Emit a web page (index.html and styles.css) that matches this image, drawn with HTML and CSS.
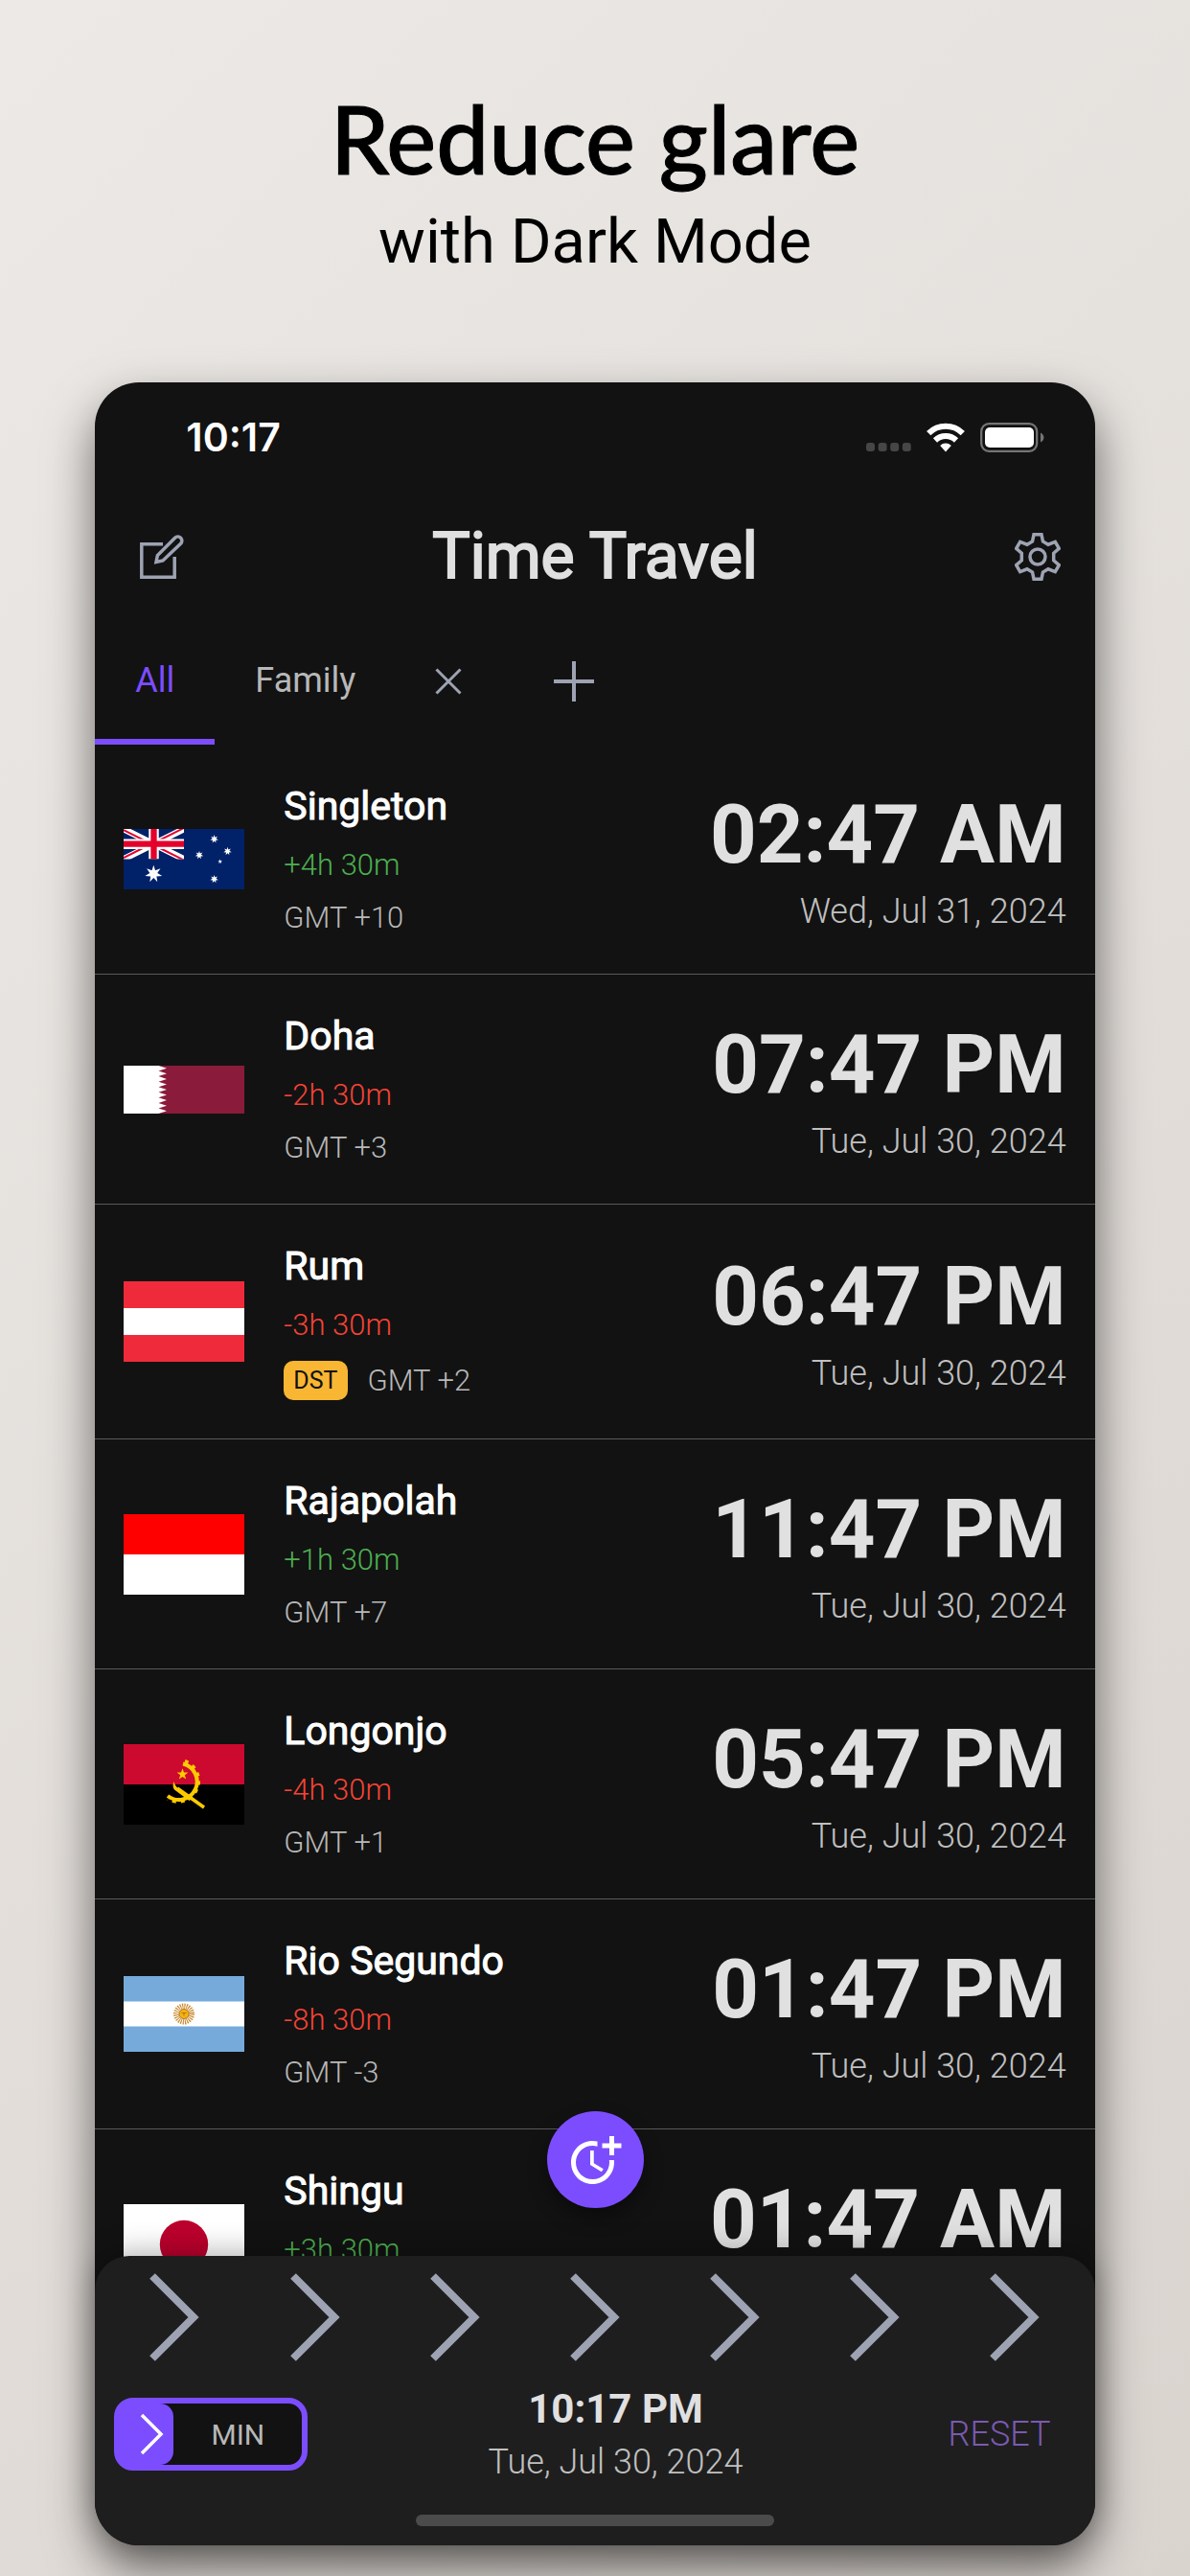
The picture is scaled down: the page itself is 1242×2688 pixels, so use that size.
FILE: index.html
```html
<!DOCTYPE html>
<html lang="en">
<head>
    <meta charset="UTF-8">
    <meta name="viewport" content="width=device-width, initial-scale=1.0">
    <title>Time Travel - Dark Mode</title>
    <link rel="stylesheet" href="styles.css">
</head>
<body>
    <header class="promo">
        <h1>Reduce glare</h1>
        <p>with Dark Mode</p>
    </header>

    <main class="phone">
        <!-- Status bar -->
        <div class="status-bar">
            <span class="status-time">10:17</span>
            <div class="status-icons">
                <svg class="signal" viewBox="0 0 47 31">
                    <g fill="#464646">
                        <rect x="0" y="21" width="9" height="9" rx="3"/>
                        <rect x="12.6" y="21" width="9" height="9" rx="3"/>
                        <rect x="25.2" y="21" width="9" height="9" rx="3"/>
                        <rect x="37.8" y="21" width="9" height="9" rx="3"/>
                    </g>
                </svg>
                <svg class="wifi" viewBox="0 0 40 31">
                    <g fill="none" stroke="#fff" stroke-width="6">
                        <path d="M2.2 11.2a25.2 25.2 0 0 1 35.6 0"/>
                        <path d="M9 18.5a15.6 15.6 0 0 1 22 0"/>
                    </g>
                    <path d="M14.2 24a8.2 8.2 0 0 1 11.6 0L20 30.6z" fill="#fff"/>
                </svg>
                <svg class="battery" viewBox="0 0 68 31">
                    <rect x="1.2" y="1.2" width="58" height="28.6" rx="8" fill="none" stroke="#757575" stroke-width="2.2"/>
                    <rect x="5" y="5" width="51" height="21" rx="5" fill="#fff"/>
                    <path d="M63 10.5c4.6 2 4.6 8 0 10z" fill="#757575"/>
                </svg>
            </div>
        </div>

        <!-- Title bar -->
        <div class="title-bar">
            <button class="icon-btn" aria-label="Edit">
                <svg width="48" height="50" viewBox="0 0 48 50" fill="none" stroke="#9da3b2" stroke-width="3.5">
                    <path d="M24 11.7H1.8V46.2H36.2V25"/>
                    <path d="M17 30.5l1.4-7L36.6 5.2a4.2 4.2 0 0 1 6 6L24 29z"/>
                </svg>
            </button>
            <h2>Time Travel</h2>
            <button class="icon-btn" aria-label="Settings">
                <svg width="48" height="50" viewBox="-24 -25 48 50" fill="none" stroke="#9da3b2" stroke-width="3.5">
                    <path d="M-4-23.2H4L5.5-16 11-12.8 18.3-15.6 22.3-8.6 16.7-3.8V3.8L22.3 8.6 18.3 15.6 11 12.8 5.5 16 4 23.2H-4L-5.5 16-11 12.8-18.3 15.6-22.3 8.6-16.7 3.8V-3.8L-22.3-8.6-18.3-15.6-11-12.8-5.5-16z"/>
                    <circle r="8"/>
                </svg>
            </button>
        </div>

        <!-- Group tabs -->
        <nav class="tabs">
            <button class="tab active">All</button>
            <button class="tab">Family</button>
            <button class="tab-icon" aria-label="Remove group">
                <svg width="42" height="42" viewBox="0 0 42 42" stroke="#9da3b2" stroke-width="3">
                    <path d="M8.5 8.5l25 25M33.5 8.5l-25 25"/>
                </svg>
            </button>
            <button class="tab-icon wide" aria-label="Add group">
                <svg width="42" height="42" viewBox="0 0 42 42" stroke="#9da3b2" stroke-width="4">
                    <path d="M21 0v42M0 21h42"/>
                </svg>
            </button>
        </nav>

        <!-- Clocks -->
        <ul class="clocks">
            <li class="clock">
                <svg class="flag" viewBox="0 0 126 63">
                    <defs>
                        <clipPath id="jack"><path d="M0 0h63v31.5H0z"/></clipPath>
                        <polygon id="star7" points="0,-10 1.9,-4 7.8,-6.2 4.3,-1 9.7,2.2 3.4,2.7 4.3,9 0,4.4 -4.3,9 -3.4,2.7 -9.7,2.2 -4.3,-1 -7.8,-6.2 -1.9,-4"/>
                        <polygon id="star5" points="0,-10 2.4,-3.2 9.5,-3.1 3.8,1.2 5.9,8.1 0,4 -5.9,8.1 -3.8,1.2 -9.5,-3.1 -2.4,-3.2"/>
                    </defs>
                    <path fill="#012169" d="M0 0h126v63H0z"/>
                    <g clip-path="url(#jack)">
                        <path d="M0 0l63 31.5M63 0L0 31.5" stroke="#fff" stroke-width="6.5"/>
                        <path d="M0 1.2l31 15.5M32 17l31 15.5M63-1L32 14.5M31 14.5L0 30" stroke="#e4002b" stroke-width="2"/>
                        <path d="M31.5 0v31.5M0 15.7h63" stroke="#fff" stroke-width="10.5"/>
                        <path d="M31.5 0v31.5M0 15.7h63" stroke="#e4002b" stroke-width="6.3"/>
                    </g>
                    <g fill="#fff">
                        <use href="#star7" transform="translate(31.3 47) scale(.92)"/>
                        <use href="#star7" transform="translate(94.6 10.5) scale(.44)"/>
                        <use href="#star7" transform="translate(108.5 23.2) scale(.44)"/>
                        <use href="#star7" transform="translate(79 27.3) scale(.44)"/>
                        <use href="#star7" transform="translate(94.6 52.3) scale(.44)"/>
                        <use href="#star5" transform="translate(100.7 34) scale(.25)"/>
                    </g>
                </svg>
                <div class="place">
                    <h3>Singleton</h3>
                    <p class="diff ahead">+4h 30m</p>
                    <p class="zone">GMT +10</p>
                </div>
                <div class="when">
                    <p class="time">02:47 AM</p>
                    <p class="date">Wed, Jul 31, 2024</p>
                </div>
            </li>
            <li class="clock">
                <svg class="flag" viewBox="0 0 126 50">
                    <path fill="#fff" d="M0 0h126v50H0z"/>
                    <path fill="#8a1b3b" d="M126 0H36.5l8.5 2.8-8.5 2.8 8.5 2.7-8.5 2.8 8.5 2.8-8.5 2.8 8.5 2.8-8.5 2.7 8.5 2.8-8.5 2.8 8.5 2.8-8.5 2.7 8.5 2.8-8.5 2.8 8.5 2.8-8.5 2.7 8.5 2.8-8.5 2.8H126z"/>
                </svg>
                <div class="place">
                    <h3>Doha</h3>
                    <p class="diff behind">-2h 30m</p>
                    <p class="zone">GMT +3</p>
                </div>
                <div class="when">
                    <p class="time">07:47 PM</p>
                    <p class="date">Tue, Jul 30, 2024</p>
                </div>
            </li>
            <li class="clock">
                <svg class="flag" viewBox="0 0 126 84">
                    <path fill="#ef2b3b" d="M0 0h126v84H0z"/>
                    <path fill="#fff" d="M0 28h126v28H0z"/>
                </svg>
                <div class="place">
                    <h3>Rum</h3>
                    <p class="diff behind">-3h 30m</p>
                    <p class="zone"><span class="dst">DST</span>GMT +2</p>
                </div>
                <div class="when">
                    <p class="time">06:47 PM</p>
                    <p class="date">Tue, Jul 30, 2024</p>
                </div>
            </li>
            <li class="clock">
                <svg class="flag" viewBox="0 0 126 84">
                    <path fill="#fff" d="M0 0h126v84H0z"/>
                    <path fill="#f00" d="M0 0h126v42H0z"/>
                </svg>
                <div class="place">
                    <h3>Rajapolah</h3>
                    <p class="diff ahead">+1h 30m</p>
                    <p class="zone">GMT +7</p>
                </div>
                <div class="when">
                    <p class="time">11:47 PM</p>
                    <p class="date">Tue, Jul 30, 2024</p>
                </div>
            </li>
            <li class="clock">
                <svg class="flag" viewBox="0 0 126 84">
                    <path d="M0 0h126v84H0z"/>
                    <path fill="#cc092f" d="M0 0h126v42H0z"/>
                    <g fill="none" stroke="#ffcb00">
                        <path d="M62 20.5A19 19 0 1 1 46 54" stroke-width="4"/>
                        <path d="M64 17.5A22 22 0 1 1 46 57.5" stroke-width="3" stroke-dasharray="4 5"/>
                        <path d="M56 46l28 20" stroke-width="3.5"/>
                    </g>
                    <path d="M52.5 39q1 5 5 7.5l14 10-3 2.5L53 47.5q-2.5-3-.5-8.5z" fill="#ffcb00"/>
                    <use href="#star5" fill="#ffcb00" transform="translate(61.5 31.5) scale(.62)"/>
                </svg>
                <div class="place">
                    <h3>Longonjo</h3>
                    <p class="diff behind">-4h 30m</p>
                    <p class="zone">GMT +1</p>
                </div>
                <div class="when">
                    <p class="time">05:47 PM</p>
                    <p class="date">Tue, Jul 30, 2024</p>
                </div>
            </li>
            <li class="clock">
                <svg class="flag" viewBox="0 0 126 79">
                    <path fill="#75aadb" d="M0 0h126v79H0z"/>
                    <path fill="#fff" d="M0 26.5h126v26H0z"/>
                    <circle cx="63" cy="39.5" r="8" fill="none" stroke="#c98a2e" stroke-width="6" stroke-dasharray="1.1 1"/>
                    <circle cx="63" cy="39.5" r="5" fill="#f6b40e" stroke="#a5631b" stroke-width=".8"/>
                    <path d="M60.5 38.5h5M63 38.5v3" stroke="#a5631b" stroke-width=".8"/>
                </svg>
                <div class="place">
                    <h3>Rio Segundo</h3>
                    <p class="diff behind">-8h 30m</p>
                    <p class="zone">GMT -3</p>
                </div>
                <div class="when">
                    <p class="time">01:47 PM</p>
                    <p class="date">Tue, Jul 30, 2024</p>
                </div>
            </li>
            <li class="clock">
                <svg class="flag" viewBox="0 0 126 84">
                    <path fill="#fff" d="M0 0h126v84H0z"/>
                    <circle cx="63" cy="42" r="25.2" fill="#bc002d"/>
                </svg>
                <div class="place">
                    <h3>Shingu</h3>
                    <p class="diff ahead">+3h 30m</p>
                    <p class="zone">GMT +9</p>
                </div>
                <div class="when">
                    <p class="time">01:47 AM</p>
                    <p class="date">Wed, Jul 31, 2024</p>
                </div>
            </li>
        </ul>

        <!-- Time slider panel -->
        <section class="panel">
            <button class="fab" aria-label="Add clock">
                <svg width="60" height="60" viewBox="0 0 24 24" fill="#fff">
                    <path d="M10 8v6l4.7 2.9.8-1.2-4-2.4V8z"/>
                    <path d="M17.92 12c.05.33.08.66.08 1 0 3.9-3.1 7-7 7s-7-3.1-7-7 3.1-7 7-7c.7 0 1.37.1 2 .29V4.23c-.64-.15-1.31-.23-2-.23-5 0-9 4-9 9s4 9 9 9 9-4 9-9c0-.34-.02-.67-.06-1h-2.02z"/>
                    <path d="M20 5V2h-2v3h-3v2h3v3h2V7h3V5z"/>
                </svg>
            </button>

            <div class="arrows">
                <svg viewBox="0 0 52 92"><path d="M3 3l43 43L3 89"/></svg>
                <svg viewBox="0 0 52 92"><path d="M3 3l43 43L3 89"/></svg>
                <svg viewBox="0 0 52 92"><path d="M3 3l43 43L3 89"/></svg>
                <svg viewBox="0 0 52 92"><path d="M3 3l43 43L3 89"/></svg>
                <svg viewBox="0 0 52 92"><path d="M3 3l43 43L3 89"/></svg>
                <svg viewBox="0 0 52 92"><path d="M3 3l43 43L3 89"/></svg>
                <svg viewBox="0 0 52 92"><path d="M3 3l43 43L3 89"/></svg>
            </div>

            <div class="controls">
                <button class="unit-switch">
                    <span class="thumb">
                        <svg width="26" height="44" viewBox="0 0 26 44" fill="none" stroke="#fff" stroke-width="3.5">
                            <path d="M2 2l20 20L2 42"/>
                        </svg>
                    </span>
                    <span class="unit">MIN</span>
                </button>
                <div class="now">
                    <p class="now-time">10:17 PM</p>
                    <p class="date">Tue, Jul 30, 2024</p>
                </div>
                <button class="reset">RESET</button>
            </div>

            <div class="home-bar"></div>
        </section>
    </main>
</body>
</html>
```

FILE: styles.css
```css
* {
    margin: 0;
    padding: 0;
    box-sizing: border-box;
}
body {
    height: 100vh;
    display: flex;
    flex-direction: column;
    background: linear-gradient(135deg, #ece9e6 0%, #dad4cf 100%);
    font-family: Roboto, sans-serif;
    overflow: hidden;
}
button {
    background: none;
    border: none;
    font: inherit;
    color: inherit;
    cursor: pointer;
}
svg {
    display: block;
}

/* Headline */
.promo {
    padding: 84px 0 108px;
    text-align: center;
    color: #000;
}
.promo h1 {
    font-family: Lato, sans-serif;
    font-size: 98px;
    line-height: 120px;
    font-weight: 500;
    -webkit-text-stroke: 1px #000;
}
.promo p {
    margin-top: 10px;
    font-size: 65px;
    line-height: 77px;
}

/* Phone */
.phone {
    flex: 1;
    min-height: 0;
    width: 84%;
    margin: 0 auto 32px;
    display: flex;
    flex-direction: column;
    background: #121212;
    border-radius: 46px;
    box-shadow: 0 24px 50px rgba(0, 0, 0, 0.55);
}
.status-bar {
    display: flex;
    justify-content: space-between;
    align-items: center;
    padding: 32px 52px 0 95px;
    color: #fff;
}
.status-time {
    font-family: Inter, sans-serif;
    font-size: 41px;
    line-height: 50px;
    font-weight: 600;
}
.status-icons {
    display: flex;
    gap: 16px;
}
.status-icons svg {
    height: 31px;
}
.title-bar {
    display: flex;
    justify-content: space-between;
    align-items: center;
    margin-top: 60px;
    padding: 0 36px;
    color: #e0e0e0;
}
.icon-btn {
    display: flex;
    justify-content: flex-end;
    width: 59px;
}
.title-bar h2 {
    font-size: 66px;
    line-height: 80px;
    font-weight: 400;
    -webkit-text-stroke: 2px #e0e0e0;
}

/* Tabs */
.tabs {
    display: flex;
    margin-top: 28px;
    height: 128px;
    color: #b8b8b8;
    font-size: 36px;
    line-height: 42px;
}
.tab {
    padding: 0 42px;
    border-bottom: 6px solid transparent;
}
.tab.active {
    color: #7c4dff;
    border-bottom-color: #7c4dff;
}
.tab-icon {
    padding: 0 34px 4px;
}
.tab-icon.wide {
    padding: 0 55px 4px;
}

/* Clock rows */
.clocks {
    flex: 1;
    min-height: 0;
    overflow: hidden;
    list-style: none;
}
.clock {
    display: flex;
    align-items: center;
    padding: 40px 30px;
    border-bottom: 1px solid #5a5a5a;
}
.flag {
    width: 126px;
    margin-right: 41px;
}
.place {
    display: flex;
    flex-direction: column;
    gap: 19px;
}
.place h3 {
    font-size: 41px;
    line-height: 49px;
    font-weight: 400;
    color: #fff;
    -webkit-text-stroke: 1px #fff;
}
.diff,
.zone {
    font-size: 31px;
    line-height: 36px;
    font-weight: 300;
}
.ahead {
    color: #4caf50;
}
.behind {
    color: #f44336;
}
.zone {
    display: flex;
    align-items: center;
    gap: 21px;
    color: #b8b8b8;
}
.dst {
    padding: 0 10px;
    border-radius: 10px;
    background: #f9b633;
    color: #121212;
    font-size: 25px;
    line-height: 41px;
    font-weight: 400;
}
.when {
    margin-left: auto;
    text-align: right;
}
.time {
    font-size: 85px;
    line-height: 98px;
    font-weight: 700;
    color: #e0e0e0;
}
.date {
    margin-top: 10px;
    font-size: 36px;
    line-height: 42px;
    font-weight: 300;
    color: #c0c0c0;
}

/* Bottom panel */
.panel {
    position: relative;
    margin-top: -46px;
    padding: 18px 10px 20px;
    border-radius: 36px 36px 46px 46px;
    background: #1e1e1e;
    box-shadow: 0 -4px 30px rgba(0, 0, 0, 0.3);
}
.fab {
    position: absolute;
    top: -151px;
    left: 50%;
    margin-left: -50px;
    width: 101px;
    height: 101px;
    display: flex;
    align-items: center;
    justify-content: center;
    border-radius: 50%;
    background: #7c4dff;
    box-shadow: 0 10px 20px rgba(0, 0, 0, 0.4);
}
.arrows {
    display: flex;
    justify-content: space-around;
}
.arrows svg {
    width: 52px;
    height: 92px;
    fill: none;
    stroke: #9da3b2;
    stroke-width: 8;
}
.controls {
    display: flex;
    justify-content: space-between;
    align-items: center;
    margin-top: 26px;
    padding: 0 10px;
}
.unit-switch {
    display: flex;
    align-items: center;
    width: 202px;
    height: 76px;
    border: 6px solid #7c4dff;
    border-radius: 20px;
    background: #121212;
    color: #b8b8b8;
    font-size: 30px;
}
.thumb {
    display: flex;
    align-items: center;
    justify-content: center;
    width: 56px;
    height: 64px;
    padding-left: 11px;
    border-radius: 0 14px 14px 0;
    background: #7c4dff;
}
.unit {
    flex: 1;
}
.now {
    text-align: center;
}
.now-time {
    font-size: 42px;
    line-height: 48px;
    font-weight: 700;
    color: #e0e0e0;
}
.reset {
    padding: 0 26px;
    font-size: 36px;
    font-weight: 300;
    color: #7a5ab0;
}
.home-bar {
    width: 374px;
    height: 12px;
    margin: 34px auto 0;
    border-radius: 6px;
    background: #4b4b4b;
}
```
